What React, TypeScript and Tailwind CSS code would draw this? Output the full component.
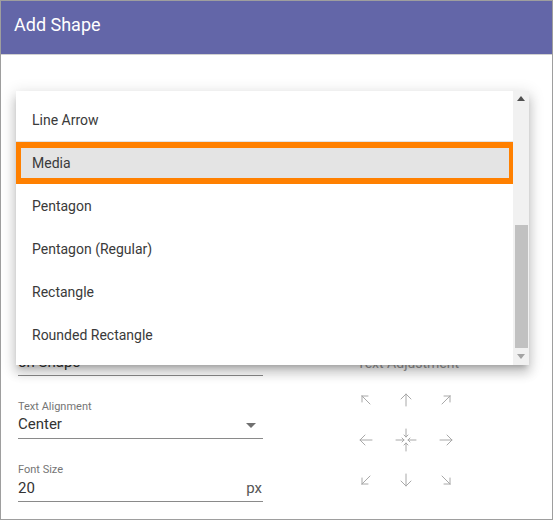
import React from "react";

const items = ["Line Arrow", "Media", "Pentagon", "Pentagon (Regular)", "Rectangle", "Rounded Rectangle"];

function Arrow({ d }: { d: string }) {
  return (
    <svg width="14" height="14" viewBox="0 0 14 14" fill="none" stroke="#a8a8a8" strokeWidth="1" strokeLinecap="round" strokeLinejoin="round">
      <path d={d} />
    </svg>
  );
}

function CenterIcon() {
  return (
    <svg width="22" height="24" viewBox="0 0 22 24" fill="none" stroke="#a8a8a8" strokeWidth="1" strokeLinecap="round" strokeLinejoin="round">
      <path d="M11 1v8M9 7l2 2 2-2" />
      <path d="M11 23v-8M9 17l2-2 2 2" />
      <path d="M1 12h8M7 10l2 2-2 2" />
      <path d="M21 12h-8M15 10l-2 2 2 2" />
    </svg>
  );
}

export default function App() {
  const font = { fontFamily: "Roboto, 'Noto Sans', sans-serif" };
  return (
    <div className="relative w-[553px] h-[520px] overflow-hidden border border-[#9e9e9e] bg-white" style={font}>
      <div className="h-[54px] bg-[#6366a8] border-b border-[#d0d0d0] flex items-center pl-[13px] pb-[5px]">
        <span className="text-white text-[18px] leading-none">Add Shape</span>
      </div>
      <div className="flex">
        <div className="ml-[17px] w-[245px] pt-[298px]">
          <div className="border-b border-[#8a8a8a] pb-[4px]">
            <div className="h-[18px] leading-[18px] text-[15px] text-[#333]">on Shape</div>
          </div>
          <div className="mt-[24px] h-[13px] leading-[13px] text-[11px] text-[#757575]">Text Alignment</div>
          <div className="mt-[3px] border-b border-[#8a8a8a] pb-[4px] flex items-center justify-between">
            <div className="h-[18px] leading-[18px] text-[15px] text-[#333] -translate-y-[1px]">Center</div>
            <svg width="10" height="5" viewBox="0 0 10 5" className="mr-[7px]"><path d="M0 0h10L5 5z" fill="#707070" /></svg>
          </div>
          <div className="mt-[24px] h-[13px] leading-[13px] text-[11px] text-[#757575]">Font Size</div>
          <div className="mt-[3px] border-b border-[#8a8a8a] pb-[4px] flex items-center justify-between">
            <div className="h-[18px] leading-[18px] text-[15px] text-[#333]">20</div>
            <div className="h-[18px] leading-[18px] text-[15px] text-[#555] mr-[1px]">px</div>
          </div>
        </div>
        <div className="ml-[83px] pt-[300px]">
          <div className="pl-[11px] h-[16px] leading-[16px] text-[14px] text-[#9a9a9a]">Text Adjustment</div>
          <div className="mt-[9px] grid grid-cols-[40px_40px_40px] grid-rows-[40px_40px_40px]">
            <div className="flex items-center justify-center"><Arrow d="M3 3h6M3 3v6M3 3l8 8" /></div>
            <div className="flex items-center justify-center"><Arrow d="M7 1v12M2 6l5-5 5 5" /></div>
            <div className="flex items-center justify-center"><Arrow d="M11 3H5M11 3v6M11 3l-8 8" /></div>
            <div className="flex items-center justify-center"><Arrow d="M1 7h12M6 2L1 7l5 5" /></div>
            <div className="flex items-center justify-center"><CenterIcon /></div>
            <div className="flex items-center justify-center"><Arrow d="M1 7h12M8 2l5 5-5 5" /></div>
            <div className="flex items-center justify-center"><Arrow d="M3 11h6M3 11V5M3 11l8-8" /></div>
            <div className="flex items-center justify-center"><Arrow d="M7 1v12M2 8l5 5 5-5" /></div>
            <div className="flex items-center justify-center"><Arrow d="M11 11H5M11 11V5M11 11L3 3" /></div>
          </div>
        </div>
      </div>

      <div className="absolute left-[15px] top-[90px] w-[513px] h-[274px] bg-white flex shadow-[0_5px_5px_-3px_rgba(0,0,0,0.2),0_8px_10px_1px_rgba(0,0,0,0.14),0_3px_14px_2px_rgba(0,0,0,0.12)]">
        <div className="flex-1 overflow-hidden pt-[7px]">
          {items.map((it) => (
            <div key={it} className={"relative h-[43px] flex items-center pl-[16px] pt-[2px] text-[14px] text-[#3a3a3a] " + (it === "Media" ? "bg-[#e4e4e4]" : "")}>
              {it}
              {it === "Media" && (
                <div className="absolute left-[-1px] right-[-2px] top-[1px] bottom-0 border-[6px] border-[#ff8000]" />
              )}
            </div>
          ))}
        </div>
        <div className="w-[16px] bg-[#f1f1f1] flex flex-col items-center">
          <div className="h-[15px] flex items-center justify-center">
            <svg width="8" height="5" viewBox="0 0 8 5"><path d="M0 5L4 0l4 5z" fill="#505050" /></svg>
          </div>
          <div className="mt-[119px] w-[13px] h-[123px] bg-[#c1c1c1]" />
          <div className="flex-1 flex items-center justify-center">
            <svg width="8" height="5" viewBox="0 0 8 5"><path d="M0 0h8L4 5z" fill="#a3a3a3" /></svg>
          </div>
        </div>
      </div>
    </div>
  );
}
